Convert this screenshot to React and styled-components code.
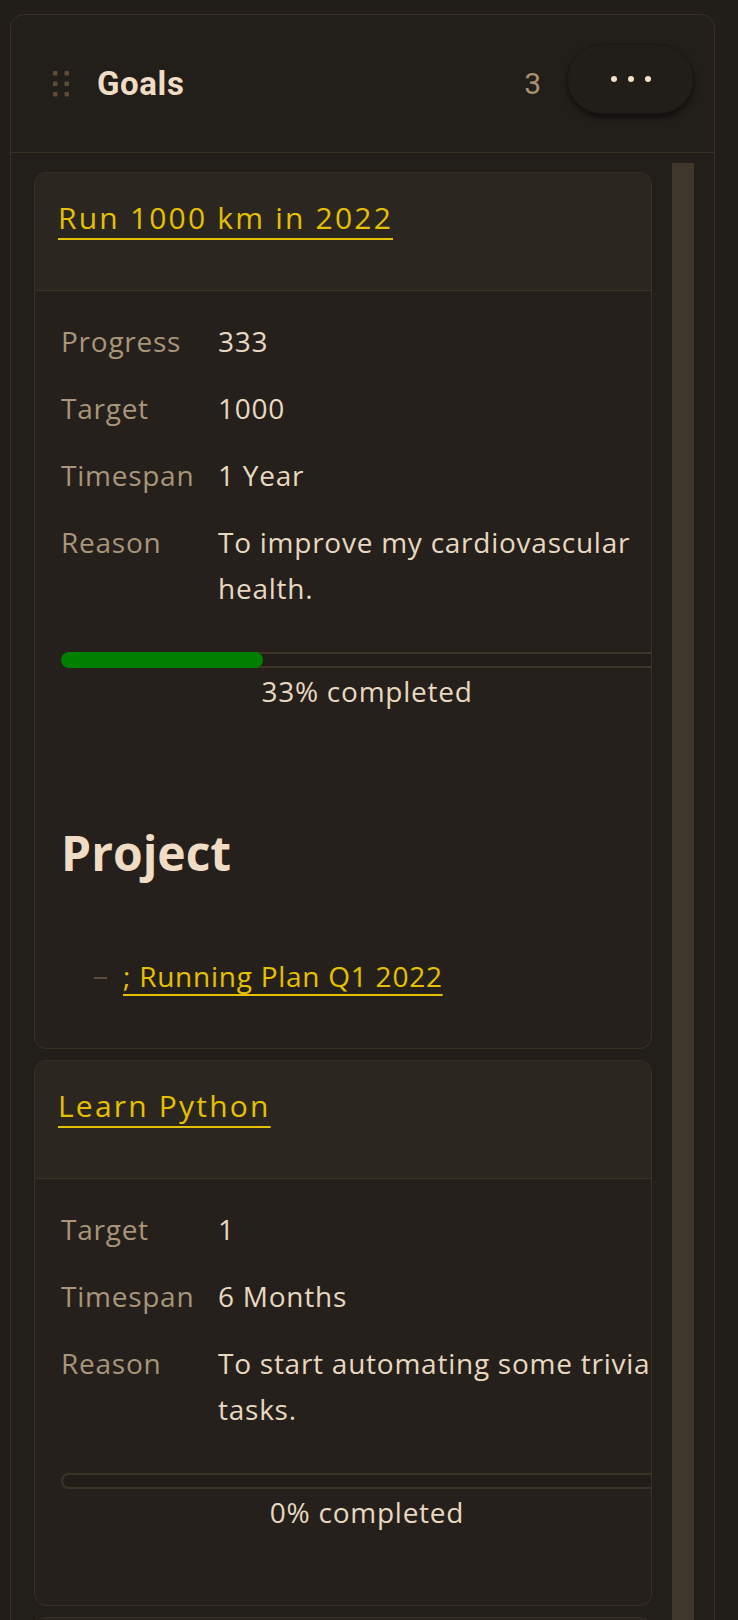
import React from 'react';
import styled, { createGlobalStyle } from 'styled-components';

const Global = createGlobalStyle`
  html, body {
    margin: 0;
    padding: 0;
    background: #211d19;
    overflow: hidden;
  }
  * { box-sizing: border-box; }
`;

const Panel = styled.div`
  margin: 14px 0 0 10px;
  width: 705px;
  height: 1700px;
  border: 1px solid #3a3124;
  border-radius: 14px;
  background: #221e1a;
  overflow: hidden;
  font-family: "Open Sans", "Liberation Sans", sans-serif;
`;

const Header = styled.div`
  height: 138px;
  display: flex;
  align-items: center;
  padding: 0 20px 0 42px;
  border-bottom: 1px solid #3a3124;
`;

const Handle = styled.svg`
  width: 16px;
  height: 27px;
  flex-shrink: 0;
`;

const Title = styled.h2`
  margin: 0 0 0 28px;
  font-family: Roboto, "Liberation Sans", sans-serif;
  font-weight: 700;
  font-size: 33px;
  letter-spacing: 0.6px;
  color: #f0dcc4;
`;

const Count = styled.span`
  margin-left: auto;
  font-family: Roboto, "Liberation Sans", sans-serif;
  font-size: 30px;
  color: #a8916f;
`;

const MoreButton = styled.button`
  margin: 0 0 10px 26px;
  width: 127px;
  height: 70px;
  border-radius: 35px;
  border: 1px solid #1b1814;
  background: #211d19;
  box-shadow: 0 4px 5px rgba(0, 0, 0, 0.5);
  display: flex;
  align-items: center;
  justify-content: center;
  gap: 11px;
  padding: 0;
`;

const Dot = styled.span`
  width: 6px;
  height: 6px;
  border-radius: 50%;
  background: #f5e1c5;
`;

const Scroller = styled.div`
  display: flex;
  gap: 20px;
  padding: 19px 20px 0 23px;
`;

const Column = styled.div`
  flex: 1;
  display: flex;
  flex-direction: column;
  gap: 11px;
  min-width: 0;
`;

const Thumb = styled.div`
  width: 22px;
  height: 1600px;
  margin-top: -9px;
  background: #40372b;
  flex-shrink: 0;
`;

const Card = styled.div`
  border: 1px solid #3a3124;
  border-radius: 12px;
  background: #25201b;
  overflow: hidden;
`;

const CardHead = styled.div`
  height: 118px;
  padding: 25px 23px 0;
  background: #2b2620;
  border-bottom: 1px solid #3a3124;
`;

const CardTitle = styled.a`
  font-size: 30px;
  line-height: 40px;
  letter-spacing: 2.2px;
  color: #e5c000;
  text-decoration: underline;
  text-decoration-thickness: 2px;
  text-underline-offset: 9px;
`;

const Body = styled.div`
  width: 638px;
  padding: 27px 0 ${p => p.$bottom}px 26px;
  font-size: 28px;
  line-height: 46px;
  letter-spacing: 0.75px;
  color: #e8d8c0;
`;

const Props = styled.div`
  display: grid;
  grid-template-columns: 157px 1fr;
  row-gap: 21px;
`;

const Label = styled.div`
  color: #a8957a;
`;

const Value = styled.div`
  color: #e8d8c0;
`;

const Track = styled.div`
  margin-top: 41px;
  height: 16px;
  border-radius: 8px;
  background: #221d19;
  box-shadow: inset 0 0 0 2px #3d3428;
  overflow: hidden;
`;

const Fill = styled.div`
  height: 100%;
  border-radius: 8px;
  background: #008000;
`;

const Caption = styled.div`
  text-align: center;
`;

const Heading = styled.h3`
  margin: 110px 0 0;
  font-size: 48px;
  line-height: 58px;
  font-weight: 700;
  letter-spacing: 0;
  color: #f0dcc4;
`;

const List = styled.ul`
  margin: 71px 0 0;
  padding: 0 0 0 62px;
  list-style: none;
`;

const Item = styled.li`
  position: relative;
  &::before {
    content: "";
    position: absolute;
    left: -29px;
    top: 24px;
    width: 13px;
    height: 2px;
    background: #5a4d3c;
  }
`;

const Link = styled.a`
  color: #e5c000;
  text-decoration: underline;
  text-decoration-thickness: 2px;
  text-underline-offset: 7px;
`;

const goals = [
  {
    title: 'Run 1000 km in 2022',
    rows: [
      ['Progress', '333'],
      ['Target', '1000'],
      ['Timespan', '1 Year'],
      ['Reason', 'To improve my cardiovascular health.'],
    ],
    pct: 33,
    project: '; Running Plan Q1 2022',
  },
  {
    title: 'Learn Python',
    rows: [
      ['Target', '1'],
      ['Timespan', '6 Months'],
      ['Reason', 'To start automating some trivial tasks.'],
    ],
    pct: 0,
  },
  {
    title: 'Read 24 books',
    rows: [
      ['Progress', '5'],
      ['Target', '24'],
    ],
    pct: 21,
  },
];

function GoalCard({ goal }) {
  return (
    <Card>
      <CardHead>
        <CardTitle>{goal.title}</CardTitle>
      </CardHead>
      <Body $bottom={goal.project ? 49 : 70}>
        <Props>
          {goal.rows.map(([k, v]) => (
            <React.Fragment key={k}>
              <Label>{k}</Label>
              <Value>{v}</Value>
            </React.Fragment>
          ))}
        </Props>
        <Track>
          <Fill style={{ width: goal.pct + '%' }} />
        </Track>
        <Caption>{goal.pct}% completed</Caption>
        {goal.project && (
          <>
            <Heading>Project</Heading>
            <List>
              <Item><Link>{goal.project}</Link></Item>
            </List>
          </>
        )}
      </Body>
    </Card>
  );
}

export default function App() {
  return (
    <>
      <Global />
      <Panel>
        <Header>
          <Handle viewBox="0 0 16 27">
            {[0, 1, 2].map(r =>
              [0, 1].map(c => (
                <rect key={r + '-' + c} x={c * 11.5} y={1 + r * 10.5} width="4.5" height="4.5" rx="0.8" fill="#5c4c38" />
              ))
            )}
          </Handle>
          <Title>Goals</Title>
          <Count>3</Count>
          <MoreButton>
            <Dot />
            <Dot />
            <Dot />
          </MoreButton>
        </Header>
        <Scroller>
          <Column>
            {goals.map(g => <GoalCard key={g.title} goal={g} />)}
          </Column>
          <Thumb />
        </Scroller>
      </Panel>
    </>
  );
}
